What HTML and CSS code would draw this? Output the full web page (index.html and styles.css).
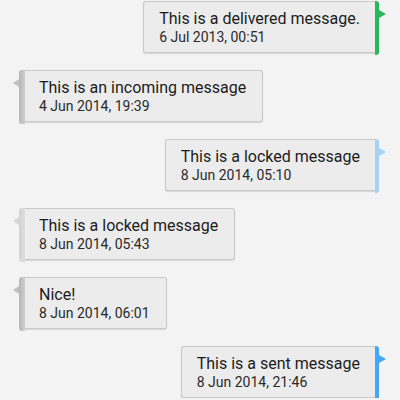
FILE: index.html
```html
<!DOCTYPE html>
<html>
<head>
<meta charset="utf-8">
<link rel="stylesheet" href="styles.css">
</head>
<body>
<div class="chat">
  <div class="row out">
    <div class="bubble">
      <div class="body"><div class="text">This is a delivered message.</div><div class="date">6 Jul 2013, 00:51</div></div>
      <div class="bar green"></div>
    </div>
  </div>
  <div class="row in">
    <div class="bubble">
      <div class="bar gray"></div>
      <div class="body"><div class="text">This is an incoming message</div><div class="date">4 Jun 2014, 19:39</div></div>
    </div>
  </div>
  <div class="row out">
    <div class="bubble">
      <div class="body"><div class="text">This is a locked message</div><div class="date">8 Jun 2014, 05:10</div></div>
      <div class="bar lightblue"></div>
    </div>
  </div>
  <div class="row in">
    <div class="bubble">
      <div class="bar lightgray"></div>
      <div class="body"><div class="text">This is a locked message</div><div class="date">8 Jun 2014, 05:43</div></div>
    </div>
  </div>
  <div class="row in">
    <div class="bubble">
      <div class="bar gray"></div>
      <div class="body"><div class="text">Nice!</div><div class="date">8 Jun 2014, 06:01</div></div>
    </div>
  </div>
  <div class="row out">
    <div class="bubble">
      <div class="body"><div class="text">This is a sent message</div><div class="date">8 Jun 2014, 21:46</div></div>
      <div class="bar blue"></div>
    </div>
  </div>
</div>
</body>
</html>
```
FILE: styles.css
```css
html, body {
  margin: 0;
  padding: 0;
  background: #f3f3f3;
  font-family: Roboto, "Noto Sans", sans-serif;
}
.chat {
  display: flex;
  flex-direction: column;
  gap: 17px;
  padding-top: 1px;
}
.row {
  display: flex;
}
.row.out {
  justify-content: flex-end;
  padding-right: 14px;
}
.row.in {
  justify-content: flex-start;
  padding-left: 13px;
}
.bubble {
  display: flex;
  height: 52px;
}
.body {
  background: #ececec;
  border: 1px solid #c9c9c9;
  box-shadow: 0 1px 1px rgba(0, 0, 0, 0.12);
  padding: 7px 15px 7px 15px;
  color: #1c1c1c;
}
.out .body {
  border-right: none;
  border-radius: 3px 0 0 3px;
  padding-right: 15px;
}
.in .body {
  border-left: none;
  border-radius: 0 3px 3px 0;
  padding-left: 14px;
  padding-right: 16px;
}
.text {
  font-size: 16px;
  line-height: 20px;
  white-space: nowrap;
}
.date {
  font-size: 14px;
  line-height: 16px;
  color: #2a2a2a;
  white-space: nowrap;
}
.bar {
  position: relative;
  width: 4px;
  height: 54px;
}
.out .bar {
  border-radius: 0 3px 3px 0;
  margin-right: 7px;
}
.in .bar {
  width: 6px;
  border-radius: 3px 0 0 3px;
  margin-left: 6px;
}
.bar::after {
  content: "";
  position: absolute;
  top: 9px;
  width: 0;
  height: 0;
  border-top: 4px solid transparent;
  border-bottom: 4px solid transparent;
}
.out .bar::after {
  left: 4px;
  border-left: 7px solid var(--c);
}
.in .bar::after {
  right: 6px;
  border-right: 6px solid var(--c);
}
.green { background: #27b85a; --c: #27b85a; }
.blue { background: #42a7f4; --c: #42a7f4; }
.lightblue { background: #a5d3f8; --c: #a5d3f8; }
.gray { background: linear-gradient(to right, #b5b5b5, #cfcfcf); --c: #c2c2c2; }
.lightgray { background: linear-gradient(to right, #d2d2d2, #dedede); --c: #d6d6d6; }
```
